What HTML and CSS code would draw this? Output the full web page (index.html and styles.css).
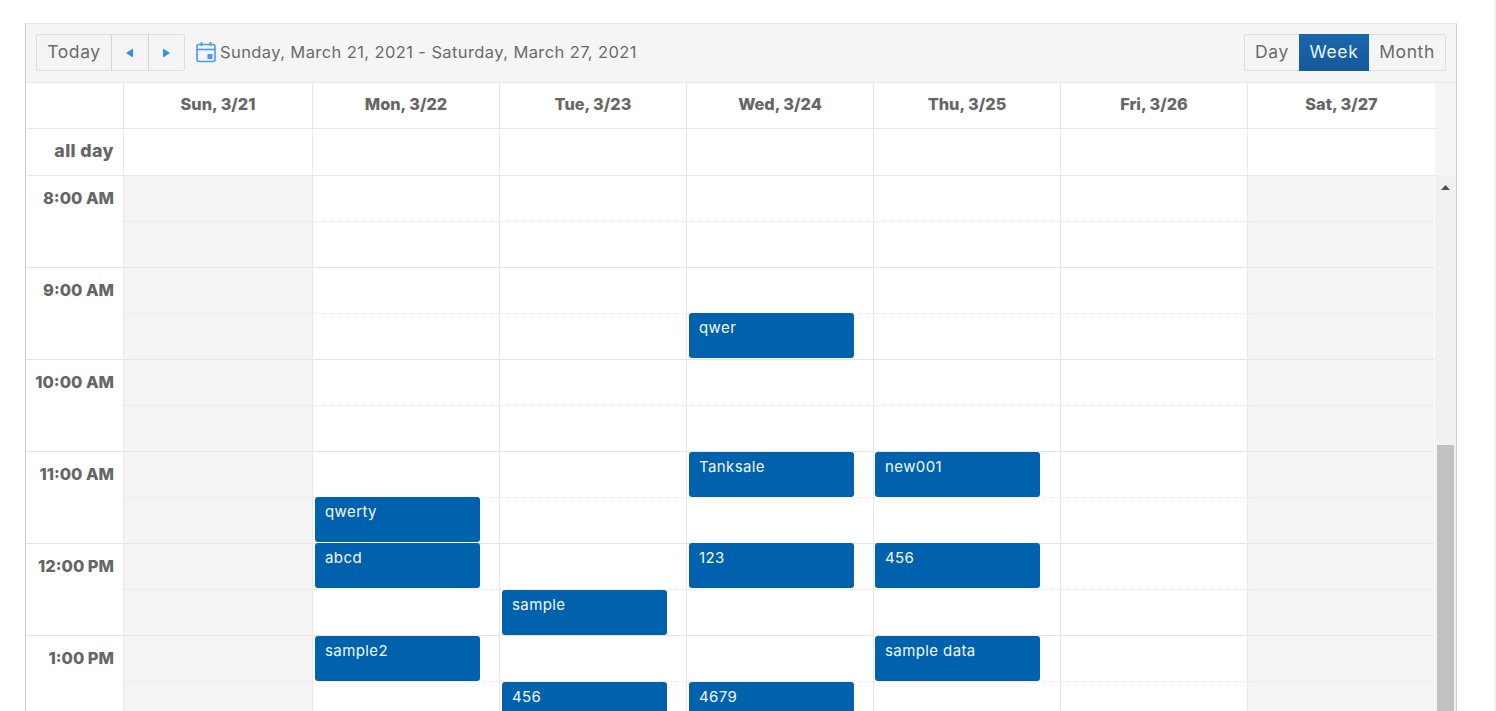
FILE: index.html
```html
<!DOCTYPE html>
<html lang="en">
<head>
<meta charset="utf-8">
<title>Calendar</title>
<link rel="stylesheet" href="styles.css">
</head>
<body>
<div class="page-line"></div>
<main class="calendar">
  <header class="toolbar">
    <div class="btn-group">
      <button class="btn btn-today">Today</button>
      <button class="btn btn-arrow"><svg width="10" height="10" viewBox="0 0 10 10"><path d="M8 0.5V9.5L1 5Z" fill="#2f8fee"/></svg></button>
      <button class="btn btn-arrow"><svg width="10" height="10" viewBox="0 0 10 10"><path d="M2 0.5V9.5L9 5Z" fill="#2f8fee"/></svg></button>
    </div>
    <div class="range">
      <svg class="cal-icon" width="20" height="22" viewBox="0 0 20 22" fill="none"><rect x="1" y="3.5" width="18" height="17" rx="2" stroke="#4a9bf0" stroke-width="1.6"/><path d="M1 8.5H19" stroke="#4a9bf0" stroke-width="1.6"/><path d="M5.5 1V5M14.5 1V5" stroke="#4a9bf0" stroke-width="1.8"/><rect x="11.5" y="13" width="5" height="5" fill="#4a9bf0"/></svg>
      <span>Sunday, March 21, 2021 - Saturday, March 27, 2021</span>
    </div>
    <div class="btn-group views">
      <button class="btn btn-day">Day</button>
      <button class="btn btn-week">Week</button>
      <button class="btn btn-month">Month</button>
    </div>
  </header>

  <div class="top-area">
    <div class="head-grid">
      <div class="cell head axis-cell"></div>
      <div class="cell head">Sun, 3/21</div>
      <div class="cell head">Mon, 3/22</div>
      <div class="cell head">Tue, 3/23</div>
      <div class="cell head">Wed, 3/24</div>
      <div class="cell head">Thu, 3/25</div>
      <div class="cell head">Fri, 3/26</div>
      <div class="cell head">Sat, 3/27</div>
      <div class="cell allday axis-cell label">all day</div>
      <div class="cell allday"></div>
      <div class="cell allday"></div>
      <div class="cell allday"></div>
      <div class="cell allday"></div>
      <div class="cell allday"></div>
      <div class="cell allday"></div>
      <div class="cell allday"></div>
    </div>
    <div class="gutter"></div>
  </div>

  <div class="body-area">
    <div class="time-grid">
      <div class="axis">
        <div class="hour-label">8:00 AM</div>
        <div class="hour-label">9:00 AM</div>
        <div class="hour-label">10:00 AM</div>
        <div class="hour-label">11:00 AM</div>
        <div class="hour-label">12:00 PM</div>
        <div class="hour-label">1:00 PM</div>
      </div>
      <div class="day weekend"><i></i><i></i><i></i><i></i><i></i><i></i><i></i><i></i><i></i><i></i><i></i><i></i></div>
      <div class="day"><i></i><i></i><i></i><i></i><i></i><i></i><i></i><i></i><i></i><i></i><i></i><i></i>
        <div class="event" style="top:321px">qwerty</div>
        <div class="event" style="top:367px">abcd</div>
        <div class="event" style="top:460px">sample2</div>
      </div>
      <div class="day"><i></i><i></i><i></i><i></i><i></i><i></i><i></i><i></i><i></i><i></i><i></i><i></i>
        <div class="event" style="top:414px">sample</div>
        <div class="event" style="top:506px">456</div>
      </div>
      <div class="day"><i></i><i></i><i></i><i></i><i></i><i></i><i></i><i></i><i></i><i></i><i></i><i></i>
        <div class="event" style="top:137px">qwer</div>
        <div class="event" style="top:276px">Tanksale</div>
        <div class="event" style="top:367px">123</div>
        <div class="event" style="top:506px">4679</div>
      </div>
      <div class="day thu"><i></i><i></i><i></i><i></i><i></i><i></i><i></i><i></i><i></i><i></i><i></i><i></i>
        <div class="event" style="top:276px">new001</div>
        <div class="event" style="top:367px">456</div>
        <div class="event" style="top:460px">sample data</div>
      </div>
      <div class="day"><i></i><i></i><i></i><i></i><i></i><i></i><i></i><i></i><i></i><i></i><i></i><i></i></div>
      <div class="day weekend"><i></i><i></i><i></i><i></i><i></i><i></i><i></i><i></i><i></i><i></i><i></i><i></i></div>
    </div>
    <div class="scrollbar">
      <svg class="scroll-up" width="9" height="5" viewBox="0 0 9 5"><path d="M0 5L4.5 0L9 5Z" fill="#505050"/></svg>
      <div class="thumb"></div>
    </div>
  </div>
</main>
</body>
</html>
```

FILE: styles.css
```css
* { box-sizing: border-box; }

html, body {
  margin: 0;
  height: 711px;
  overflow: hidden;
  background: #fff;
}

body {
  padding: 23px 0 0 25px;
  font-family: Inter, "Open Sans", sans-serif;
  color: #666;
  position: relative;
}

.page-line {
  position: absolute;
  top: 0;
  right: 0;
  width: 2px;
  height: 711px;
  background: #f1f2f5;
}

.calendar {
  width: 1432px;
  border-top: 1px solid #e4e4e4;
  border-left: 1px solid #cfcfcf;
  border-right: 1px solid #cfcfcf;
}

.toolbar {
  display: flex;
  align-items: center;
  height: 59px;
  padding: 0 10px 2px;
  background: #f5f5f5;
  border-bottom: 1px solid #e8e8e8;
}

.btn-group {
  display: flex;
  height: 37px;
  border: 1px solid #dedede;
  border-radius: 2px;
  background: #f4f4f4;
}

.btn {
  font: 400 17.5px/35px Inter, sans-serif;
  letter-spacing: 0.6px;
  color: #6b6b6b;
  background: transparent;
  border: 0;
  padding: 0 0 1px;
  display: flex;
  align-items: center;
  justify-content: center;
}

.btn-today { width: 74px; }
.btn-arrow { width: 36.5px; border-left: 1px solid #d4d4d4; padding: 1px 0 0; }

.range {
  display: flex;
  align-items: center;
  gap: 4px;
  margin-left: 11px;
  font-size: 16.5px;
  letter-spacing: 0.4px;
  color: #6b6b6b;
}

.views { margin-left: auto; }
.btn-day { width: 54px; }
.btn-week {
  width: 70px;
  margin: -1px 0;
  height: 37px;
  color: #eaf3fb;
  background: linear-gradient(#1a66ab, #15599b);
}
.btn-month { width: 76px; }

.top-area { display: flex; background: #f5f5f5; }

.head-grid,
.time-grid {
  display: grid;
  grid-template-columns: 98px 189px 187px 187px 187px 187px 187px 187px;
  width: 1409px;
  background: #fff;
}

.cell {
  border-right: 1px solid #e8e8e8;
  border-bottom: 1px solid #e8e8e8;
  display: flex;
  align-items: center;
  justify-content: center;
}

.cell:nth-child(8n) { border-right: 0; }

.head {
  height: 46px;
  padding-bottom: 3px;
  font-weight: 800;
  font-size: 16.3px;
}

.allday { height: 47px; }

.label {
  justify-content: flex-end;
  padding: 0 9px 3px 0;
  font-weight: 800;
  font-size: 17.8px;
  letter-spacing: 0.4px;
}

.gutter { width: 21px; }

.body-area { display: flex; }

.time-grid {
  height: 552px;
}

.axis { border-right: 1px solid #e8e8e8; }

.hour-label {
  height: 92px;
  padding: 10px 9px 0 0;
  text-align: right;
  font-weight: 800;
  font-size: 16.4px;
  line-height: 24px;
  border-bottom: 1px solid #e4e4e4;
}

.day {
  position: relative;
  border-right: 1px solid #e8e8e8;
}

.day:last-child { border-right: 1px solid #fff; background: #fff; }

.day i {
  display: block;
  height: 46px;
  border-bottom: 1px dotted #e8e8e8;
}

.day i:nth-of-type(2n) { border-bottom: 1px solid #e4e4e4; }

.weekend i { background: #f4f4f4; }

.event {
  position: absolute;
  left: 2px;
  width: 165px;
  height: 45px;
  padding: 6px 10px;
  background: #0061ad;
  border-radius: 3px;
  color: #f4f8fc;
  font-size: 15px;
  line-height: 18px;
  letter-spacing: 0.4px;
}

.thu .event { left: 1px; }

.scrollbar {
  width: 21px;
  padding: 0 2px 0 2px;
  background: #f1f1f1;
  display: flex;
  flex-direction: column;
  align-items: center;
}

.scroll-up { margin-top: 9px; flex: none; }

.thumb {
  margin-top: 255px;
  width: 17px;
  height: 400px;
  background: #c1c1c1;
  flex: none;
}
```
